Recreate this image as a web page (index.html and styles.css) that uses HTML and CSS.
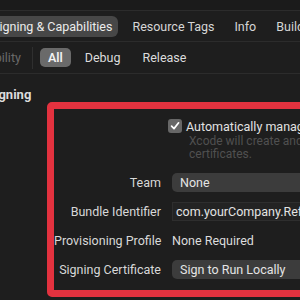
FILE: index.html
```html
<!DOCTYPE html>
<html lang="en">
<head>
    <meta charset="UTF-8">
    <title>Signing &amp; Capabilities</title>
    <link rel="stylesheet" href="styles.css">
</head>
<body>

<!-- Top strip -->
<div class="toolbar"></div>

<!-- Editor tabs -->
<nav class="tabs">
    <span class="tab active">Signing &amp; Capabilities</span>
    <span class="tab">Resource Tags</span>
    <span class="tab">Info</span>
    <span class="tab">Build Settings</span>
</nav>

<!-- Configuration filter -->
<div class="filter">
    <span class="filter-label">Capability</span>
    <span class="divider"></span>
    <span class="seg active">All</span>
    <span class="seg">Debug</span>
    <span class="seg">Release</span>
</div>

<!-- Signing section -->
<section class="signing">
    <h2 class="section-title">Signing</h2>
    <div class="highlight">
        <div class="form">
            <div class="label"></div>
            <div class="value auto">
                <label class="check-row">
                    <span class="checkbox">
                        <svg width="10" height="10" viewBox="0 0 10 10">
                            <path d="M1.6 5.2 L4 7.6 L8.6 1.8" fill="none" stroke="#fff" stroke-width="1.7" stroke-linecap="round" stroke-linejoin="round"/>
                        </svg>
                    </span>
                    Automatically manage signing
                </label>
                <p class="hint">Xcode will create and update profiles, app IDs, and certificates.</p>
            </div>

            <div class="label">Team</div>
            <div class="value"><span class="popup">None</span></div>

            <div class="label">Bundle Identifier</div>
            <div class="value"><span class="field">com.yourCompany.ReflectiveApp</span></div>

            <div class="label">Provisioning Profile</div>
            <div class="value"><span class="plain">None Required</span></div>

            <div class="label">Signing Certificate</div>
            <div class="value"><span class="popup">Sign to Run Locally</span></div>
        </div>
    </div>
</section>

</body>
</html>
```

FILE: styles.css
```css
body {
    margin: 0;
    background: #1e1e1e;
    color: #dedede;
    font-family: Roboto, "Liberation Sans", sans-serif;
    font-size: 12.5px;
    overflow: hidden;
    width: 300px;
    height: 300px;
}

.toolbar {
    height: 10px;
    background: #1b1b1b;
    border-bottom: 1px solid #2c2c2c;
}

.tabs {
    display: flex;
    align-items: center;
    height: 30px;
    white-space: nowrap;
    border-bottom: 1px solid #2c2c2c;
    margin-left: -14px;
}

.tab {
    padding: 3px 6px;
    margin-right: 8px;
    border-radius: 6px;
    color: #d6d6d6;
}

.tab.active {
    background: #474747;
    color: #ececec;
}

.filter {
    display: flex;
    align-items: center;
    height: 31px;
    white-space: nowrap;
    border-bottom: 1px solid #2c2c2c;
    margin-left: -34px;
}

.filter-label {
    color: #6a6a6a;
}

.divider {
    width: 1px;
    height: 22px;
    background: #2f2f2f;
    margin: 0 7px 0 11px;
}

.seg {
    padding: 2px 8px;
    margin-right: 6px;
    border-radius: 5px;
    color: #dcdcdc;
}

.seg.active {
    background: #6a6a6a;
    color: #f2f2f2;
    font-weight: 600;
}

.section-title {
    margin: 0;
    font-size: 13px;
    font-weight: 700;
    color: #dcdcdc;
    margin-left: -13px;
    padding-top: 14px;
    height: 14px;
    line-height: 14px;
}

.highlight {
    margin: 0 0 0 47px;
    width: 300px;
    border: 7px solid #e3323f;
    border-radius: 5px;
    padding: 10px 0 6px;
}

.form {
    display: grid;
    grid-template-columns: 107px 1fr;
    column-gap: 11px;
    align-items: center;
    white-space: nowrap;
}

.label {
    text-align: right;
    color: #d8d8d8;
    height: 29px;
    line-height: 29px;
}

.value {
    min-width: 0;
    overflow: hidden;
}

.value.auto {
    overflow: visible;
    padding-bottom: 7px;
}

.check-row {
    display: flex;
    align-items: center;
    gap: 4px;
    margin-left: -4px;
    height: 14px;
    color: #e2e2e2;
}

.checkbox {
    flex-shrink: 0;
    display: flex;
    align-items: center;
    justify-content: center;
    width: 14px;
    height: 14px;
    border-radius: 3px;
    background: #676767;
}

.hint {
    margin: 2px 0 0 17px;
    width: 280px;
    white-space: normal;
    font-size: 12px;
    line-height: 13px;
    color: #505050;
}

.popup {
    display: block;
    height: 19px;
    line-height: 19px;
    padding-left: 8px;
    border-radius: 5px;
    background: #3c3c3c;
    color: #e4e4e4;
}

.field {
    display: block;
    height: 17px;
    line-height: 17px;
    padding-left: 3px;
    background: #232323;
    border: 1px solid #2e2e2e;
    color: #e4e4e4;
}

.plain {
    color: #dcdcdc;
}
```
